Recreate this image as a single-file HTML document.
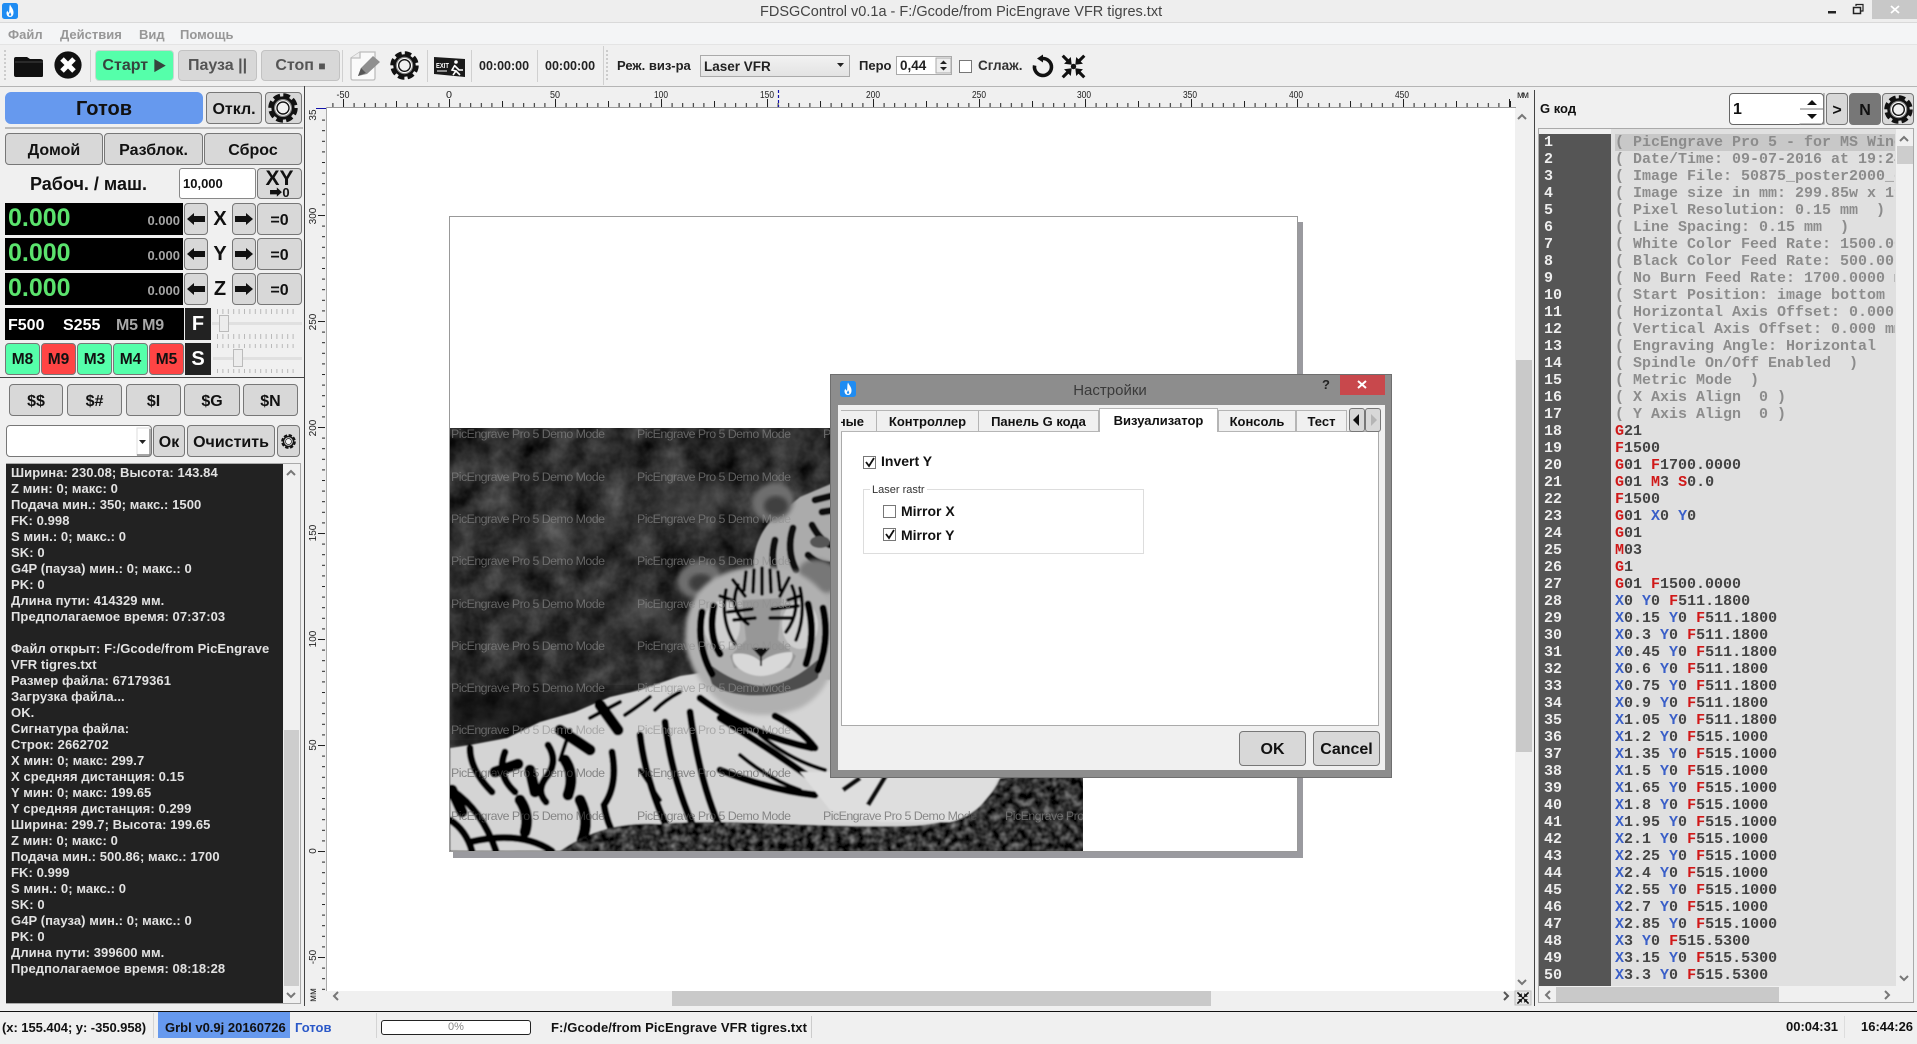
<!DOCTYPE html>
<html lang="ru"><head><meta charset="utf-8"><title>FDSGControl</title>
<style>
html,body{margin:0;padding:0;width:1917px;height:1038px;overflow:hidden;background:#f0f0f0;font-family:"Liberation Sans","Noto Sans CJK SC",sans-serif;color:#111}
div,span{box-sizing:border-box}
.a{position:absolute}
.t{position:absolute;white-space:nowrap;font-weight:bold}
.b{position:absolute;display:flex;align-items:center;justify-content:center;border:1px solid #777;border-radius:4px;background:#d8d8d8;font-weight:bold;font-size:16px;white-space:nowrap;padding-top:3px}
.tb{border-color:#c2c2c2;color:#555;font-size:16px;padding-top:0;padding-bottom:0}
.k{background:#000;position:absolute;left:5px;width:178px}
.gn{position:absolute;left:3px;top:0;line-height:30px;font:bold 25px/30px "Liberation Sans",sans-serif;color:#5be36d}
.sm{position:absolute;right:3px;bottom:7px;font:bold 13px/15px "Liberation Sans",sans-serif;color:#a5a5a5}
.m{position:absolute;top:343px;width:35px;height:32px;font-size:15.5px;border-radius:4px;display:flex;align-items:center;justify-content:center;font-weight:bold;border:1px solid #777;padding-top:2px}
.gr{background:#55ffaa}.rd{background:#ff4444}
#con{position:absolute;left:6px;top:464px;width:277px;height:539px;background:#222;color:#e2e2e2;font:bold 13px/16px "Liberation Sans",sans-serif;letter-spacing:.08px;padding:1px 0 0 5px;white-space:pre;overflow:hidden}
#num{position:absolute;left:1539px;top:134px;width:72px;height:852px;background:#555;color:#eee;font:bold 15px/17px "Liberation Mono",monospace;padding-left:5px;white-space:pre;overflow:hidden}
#code{position:absolute;left:1611px;top:129px;width:285px;height:857px;background:#e0e0e0;overflow:hidden}
#cd{position:absolute;left:4px;top:5px;width:280px;overflow:hidden;font:bold 15px/17px "Liberation Mono",monospace;color:#444;white-space:pre}
.c{color:#8c8c8c}i{font-style:normal;color:#d01818}u{text-decoration:none;color:#3a5fc8}
.tab{position:absolute;top:410px;height:22px;background:#f0f0f0;border:1px solid #b5b5b5;display:flex;align-items:center;justify-content:center;font:bold 13px "Liberation Sans",sans-serif;white-space:nowrap;overflow:hidden}
.cb{position:absolute;width:13px;height:13px;background:#fff;border:1px solid #777}
</style></head><body>

<!-- title bar -->
<div class="a" style="left:0;top:0;width:1917px;height:23px;background:#eeeeee;border-bottom:1px solid #d9d9d9"></div>
<div class="t" style="left:760px;top:2px;line-height:21px;font-size:14.5px;font-weight:normal;color:#444;width:400px;text-align:center">FDSGControl v0.1a - F:/Gcode/from PicEngrave VFR tigres.txt</div>
<div class="a" style="left:1872px;top:0;width:45px;height:19px;background:#c8c8c8"></div>
<!-- menu -->
<div class="a" style="left:0;top:23px;width:1917px;height:22px;background:#f4f5f6;border-bottom:1px solid #e4e4e4"></div>
<div class="t" style="left:8px;top:25px;line-height:20px;font-size:13px;color:#979797">Файл</div>
<div class="t" style="left:60px;top:25px;line-height:20px;font-size:13px;color:#979797">Действия</div>
<div class="t" style="left:139px;top:25px;line-height:20px;font-size:13px;color:#979797">Вид</div>
<div class="t" style="left:180px;top:25px;line-height:20px;font-size:13px;color:#979797">Помощь</div>
<!-- toolbar -->
<div class="a" style="left:0;top:45px;width:1917px;height:42px;background:#f0f0f0;border-bottom:1px solid #b5b5b5"></div>
<div class="b tb" style="left:95px;top:50px;width:79px;height:31px;background:#55ffaa;color:#36443e;border-color:#c8d8d0">Старт&nbsp;<span style="font-size:14px">▶</span></div>
<div class="b tb" style="left:178px;top:50px;width:79px;height:31px">Пауза ||</div>
<div class="b tb" style="left:261px;top:50px;width:79px;height:31px">Стоп&nbsp;<span style="font-size:12px">■</span></div>
<div class="t" style="left:479px;top:56px;line-height:20px;font-size:12.5px;color:#222">00:00:00</div>
<div class="t" style="left:545px;top:56px;line-height:20px;font-size:12.5px;color:#222">00:00:00</div>
<div class="t" style="left:617px;top:56px;line-height:20px;font-size:13px;color:#222">Реж. виз-ра</div>
<div class="a" style="left:700px;top:55px;width:150px;height:22px;background:linear-gradient(#f2f2f2,#e3e3e3);border:1px solid #aaa"></div>
<div class="t" style="left:704px;top:57px;line-height:20px;font-size:13.5px;color:#222">Laser VFR</div>
<div class="t" style="left:859px;top:56px;line-height:20px;font-size:13px;color:#222">Перо</div>
<div class="a" style="left:896px;top:56px;width:56px;height:19px;background:#fff;border:1px solid #aaa"></div>
<div class="t" style="left:900px;top:56px;line-height:19px;font-size:13.5px;color:#222">0,44</div>
<div class="a" style="left:959px;top:60px;width:13px;height:13px;background:#fff;border:1px solid #777"></div>
<div class="t" style="left:978px;top:56px;line-height:20px;font-size:13.5px;color:#333">Сглаж.</div>

<!-- left panel -->
<div class="b" style="left:5px;top:92px;width:198px;height:32px;background:#6699ee;border-color:#6699ee;font-size:20px;border-radius:6px">Готов</div>
<div class="b" style="left:206px;top:92px;width:56px;height:32px">Откл.</div>
<div class="b" style="left:265px;top:92px;width:37px;height:32px"></div>
<div class="a" style="left:5px;top:127px;width:298px;height:2px;background:#bbb"></div>
<div class="b" style="left:5px;top:133px;width:98px;height:32px">Домой</div>
<div class="b" style="left:104px;top:133px;width:99px;height:32px">Разблок.</div>
<div class="b" style="left:204px;top:133px;width:98px;height:32px">Сброс</div>
<div class="t" style="left:30px;top:172px;line-height:24px;font-size:18px">Рабоч. / маш.</div>
<div class="a" style="left:179px;top:168px;width:77px;height:31px;background:#fff;border:1px solid #888;border-radius:3px"></div>
<div class="t" style="left:183px;top:168px;line-height:31px;font-size:13px">10,000</div>
<div class="b" style="left:257px;top:168px;width:45px;height:31px;font-size:21px;line-height:16px;display:block;text-align:center;padding-top:2px">XY<div style="font-size:13px;line-height:11px;margin-top:0">➡0</div></div>

<div class="k" style="top:203px;height:32px"><span class="gn">0.000</span><span class="sm">0.000</span></div>
<div class="k" style="top:238px;height:32px"><span class="gn">0.000</span><span class="sm">0.000</span></div>
<div class="k" style="top:273px;height:32px"><span class="gn">0.000</span><span class="sm">0.000</span></div>
<div class="b" style="left:184px;top:203px;width:24px;height:32px"></div><div class="b" style="left:232px;top:203px;width:24px;height:32px"></div><div class="b" style="left:257px;top:203px;width:45px;height:32px">=0</div>
<div class="b" style="left:184px;top:238px;width:24px;height:32px"></div><div class="b" style="left:232px;top:238px;width:24px;height:32px"></div><div class="b" style="left:257px;top:238px;width:45px;height:32px">=0</div>
<div class="b" style="left:184px;top:273px;width:24px;height:32px"></div><div class="b" style="left:232px;top:273px;width:24px;height:32px"></div><div class="b" style="left:257px;top:273px;width:45px;height:32px">=0</div>
<div class="t" style="left:208px;width:24px;text-align:center;top:203px;line-height:32px;font-size:20px">X</div>
<div class="t" style="left:208px;width:24px;text-align:center;top:238px;line-height:32px;font-size:20px">Y</div>
<div class="t" style="left:208px;width:24px;text-align:center;top:273px;line-height:32px;font-size:20px">Z</div>

<div class="a" style="left:5px;top:308px;width:179px;height:32px;background:#000"></div>
<div class="t" style="left:8px;top:310px;line-height:32px;font-size:16px;color:#fff">F500</div>
<div class="t" style="left:63px;top:310px;line-height:32px;font-size:16px;color:#fff">S255</div>
<div class="t" style="left:116px;top:310px;line-height:32px;font-size:16px;color:#a8a8a8;letter-spacing:-.2px">M5 M9</div>
<div class="t" style="left:185px;top:308px;width:26px;height:32px;background:#222;color:#fff;font-size:20px;line-height:33px;text-align:center">F</div>
<div class="m gr" style="left:5px">M8</div><div class="m rd" style="left:41px">M9</div><div class="m gr" style="left:77px">M3</div><div class="m gr" style="left:113px">M4</div><div class="m rd" style="left:149px">M5</div>
<div class="t" style="left:185px;top:343px;width:26px;height:32px;background:#222;color:#fff;font-size:20px;line-height:33px;text-align:center">S</div>
<div class="a" style="left:212px;top:322px;width:90px;height:3px;background:#e0e0e0"></div>
<div class="a" style="left:219px;top:315px;width:10px;height:17px;background:#ececec;border:1px solid #bbb"></div>
<div class="a" style="left:213px;top:357px;width:89px;height:3px;background:#e0e0e0"></div>
<div class="a" style="left:233px;top:349px;width:10px;height:18px;background:#ececec;border:1px solid #bbb"></div>
<div class="a" style="left:0;top:377px;width:304px;height:1px;background:#444"></div>

<div class="b" style="left:9px;top:384px;width:54px;height:32px">$$</div>
<div class="b" style="left:67px;top:384px;width:55px;height:32px">$#</div>
<div class="b" style="left:126px;top:384px;width:55px;height:32px">$I</div>
<div class="b" style="left:184px;top:384px;width:56px;height:32px">$G</div>
<div class="b" style="left:243px;top:384px;width:55px;height:32px">$N</div>
<div class="a" style="left:6px;top:425px;width:146px;height:32px;background:#fff;border:1px solid #777;border-radius:4px"></div>
<div class="b" style="left:153px;top:425px;width:32px;height:32px">Ок</div>
<div class="b" style="left:187px;top:425px;width:88px;height:32px">Очистить</div>
<div class="b" style="left:277px;top:425px;width:23px;height:32px"></div>

<div class="a" style="left:6px;top:463px;width:295px;height:541px;border:1px solid #aaa;background:#f0f0f0"></div>
<div id="con">Ширина: 230.08; Высота: 143.84
Z мин: 0; макс: 0
Подача мин.: 350; макс.: 1500
FK: 0.998
S мин.: 0; макс.: 0
SK: 0
G4P (пауза) мин.: 0; макс.: 0
PK: 0
Длина пути: 414329 мм.
Предполагаемое время: 07:37:03

Файл открыт: F:/Gcode/from PicEngrave
VFR tigres.txt
Размер файла: 67179361
Загрузка файла...
OK.
Сигнатура файла:
Строк: 2662702
X мин: 0; макс: 299.7
X средняя дистанция: 0.15
Y мин: 0; макс: 199.65
Y средняя дистанция: 0.299
Ширина: 299.7; Высота: 199.65
Z мин: 0; макс: 0
Подача мин.: 500.86; макс.: 1700
FK: 0.999
S мин.: 0; макс.: 0
SK: 0
G4P (пауза) мин.: 0; макс.: 0
PK: 0
Длина пути: 399600 мм.
Предполагаемое время: 08:18:28</div>
<div class="a" style="left:284px;top:730px;width:15px;height:256px;background:#cdcdcd"></div>

<!-- canvas -->
<div class="a" style="left:304px;top:86px;width:1px;height:920px;background:#444"></div>
<div class="a" style="left:1534px;top:90px;width:1px;height:916px;background:#444"></div>
<div class="a" style="left:326px;top:108px;width:1189px;height:883px;background:#fff"></div>
<div class="a" style="left:672px;top:991px;width:539px;height:15px;background:#c9c9c9"></div>
<div class="a" style="left:1516px;top:360px;width:16px;height:392px;background:#c9c9c9"></div>
<div class="a" style="left:453px;top:222px;width:850px;height:636px;background:#9a9a9f"></div>
<div class="a" style="left:449px;top:216px;width:849px;height:636px;background:#fff;border:1px solid #999"></div>

<!-- main svg: rulers, tiger, icons -->
<svg class="a" style="left:0;top:0" width="1917" height="1038" viewBox="0 0 1917 1038" font-family="'Liberation Sans',sans-serif">
<defs>
<pattern id="t1" patternUnits="userSpaceOnUse" x="449" y="99" width="10.6" height="8"><rect y="4" width="1" height="4" fill="#222"/></pattern>
<pattern id="t2" patternUnits="userSpaceOnUse" x="449" y="99" width="53" height="8"><rect y="2" width="1" height="6" fill="#222"/></pattern>
<pattern id="t3" patternUnits="userSpaceOnUse" x="449" y="99" width="106" height="8"><rect width="1" height="8" fill="#222"/></pattern>
<pattern id="v1" patternUnits="userSpaceOnUse" x="318" y="851" width="8" height="10.6"><rect x="4" width="3" height="1" fill="#222"/></pattern>
<pattern id="v3" patternUnits="userSpaceOnUse" x="318" y="851" width="8" height="106"><rect width="7" height="1" fill="#222"/></pattern>
<pattern id="sl" patternUnits="userSpaceOnUse" width="5.4" height="5" x="217" y="0"><rect width="1" height="5" fill="#b8b8b8"/></pattern>
<filter id="n" x="0" y="0" width="1" height="1" color-interpolation-filters="sRGB"><feTurbulence type="fractalNoise" baseFrequency=".035" numOctaves="4" seed="4"/><feColorMatrix values=".45 0 0 0 -.05 .45 0 0 0 -.05 .45 0 0 0 -.05 0 0 0 0 1"/></filter>
<filter id="gs" x="0" y="0" width="1" height="1" color-interpolation-filters="sRGB"><feTurbulence type="fractalNoise" baseFrequency=".14" numOctaves="2" seed="8"/><feColorMatrix values=".9 0 0 0 -.26 .9 0 0 0 -.26 .9 0 0 0 -.26 0 0 0 0 1" result="c"/><feComposite in="c" in2="SourceGraphic" operator="in"/></filter>
<filter id="bl"><feGaussianBlur stdDeviation=".7"/></filter>
<filter id="bl2"><feGaussianBlur stdDeviation="2"/></filter>
<filter id="bl6"><feGaussianBlur stdDeviation="7"/></filter>
<symbol id="gear" viewBox="0 0 30 30"><circle cx="15" cy="15" r="13" fill="none" stroke="#111" stroke-width="3.4" stroke-dasharray="6.8 3.4"/><circle cx="15" cy="15" r="11.6" fill="#111"/><circle cx="15" cy="15" r="9" fill="#8a8a8a"/><circle cx="15" cy="15" r="7.8" fill="#fff"/><circle cx="15" cy="15" r="6" fill="#f0f0f0" stroke="#111" stroke-width="1.4"/></symbol>
<symbol id="col" viewBox="0 0 30 30"><g stroke="#111" stroke-width="3.4" fill="none"><path d="M3 3 10 10M27 3 20 10M3 27 10 20M27 27 20 20"/></g><g fill="#111"><path d="M13 13 4.500 12 12 4.500Z"/><path d="M17 13 25.500 12 18 4.500Z"/><path d="M13 17 4.500 18 12 25.500Z"/><path d="M17 17 25.500 18 18 25.500Z"/><circle cx="15" cy="15" r="3"/></g></symbol>
<symbol id="logo" viewBox="0 0 16 16"><rect width="16" height="16" rx="2.5" fill="#1f8cf2"/><path d="M8 1.5C9 4 11.5 6 11.5 9.5 11.5 12.5 10 14 8 14 6 14 4.5 12.5 4.5 10 4.5 9 5 8.2 5.6 7.6 5.6 9 6.3 9.5 7 9.5 7.6 7 7 4 8 1.5Z" fill="#fff"/><path d="M8 9C8.6 10.5 9.4 11 9.2 12 9 13 7.2 13 6.900 12 6.700 11 7.800 10.500 8 9Z" fill="#1f8cf2"/></symbol>
</defs>

<!-- tiger image -->
<svg x="450" y="428" width="633" height="423" viewBox="450 428 633 423">
<rect x="450" y="428" width="633" height="423" fill="#333" filter="url(#n)"/>
<ellipse cx="690" cy="500" rx="40" ry="26" fill="#666" opacity=".3" filter="url(#bl6)"/>
<ellipse cx="560" cy="540" rx="60" ry="25" fill="#606060" opacity=".2" filter="url(#bl6)"/>
<ellipse cx="640" cy="620" rx="50" ry="30" fill="#555" opacity=".2" filter="url(#bl6)"/>
<rect x="450" y="690" width="190" height="50" fill="#0a0a0a" opacity=".55" filter="url(#bl6)"/>
<g filter="url(#bl)">
<!-- rear tiger -->
<path d="M754 568C752 550 762 530 770 522L800 497 840 480 1083 470 1083 780 760 780Z" fill="#ababab"/>
<ellipse cx="773" cy="502" rx="21" ry="19" transform="rotate(-25 773 502)" fill="#6e6e6e" filter="url(#bl2)"/><ellipse cx="776" cy="506" rx="12" ry="10" fill="#3f3f3f" filter="url(#bl2)"/>
<g stroke="#070707" fill="none" stroke-width="7" stroke-linecap="round"><path d="M775 540Q770 560 776 575"/><path d="M793 528Q786 550 796 570"/><path d="M812 525Q820 540 830 545"/><path d="M808 555Q818 565 832 565"/><path d="M815 500 835 495"/><path d="M822 512 835 510"/></g>
<ellipse cx="820" cy="542" rx="10" ry="6" fill="#555"/>
<!-- body -->
<path d="M450 748 470 745 507 738 540 722 575 712 610 697 640 690 680 676 720 670 830 680 1083 700 1083 775 1000 780 1000 825 900 832 700 835 620 842 560 851 450 851Z" fill="#d4d4d4"/>
<!-- head -->
<ellipse cx="699" cy="579" rx="22" ry="17" transform="rotate(-20 699 579)" fill="#6e6e6e" filter="url(#bl2)"/><ellipse cx="701" cy="583" rx="12" ry="9" fill="#3e3e3e" filter="url(#bl2)"/>
<ellipse cx="820" cy="576" rx="22" ry="16" transform="rotate(20 820 576)" fill="#777" filter="url(#bl2)"/>
<path d="M686 625C690 590 715 568 760 566 805 566 832 590 836 630 838 670 825 695 800 708 770 720 735 716 718 700 697 682 682 655 686 625Z" fill="#b0b0b0" filter="url(#bl2)"/>
<ellipse cx="722" cy="625" rx="18" ry="24" fill="#cfcfcf"/><ellipse cx="800" cy="625" rx="18" ry="24" fill="#cfcfcf"/>
<path d="M742 600 782 598 778 640 796 656 790 668 734 668 730 656 746 640Z" fill="#979797"/>
<path d="M704 660C722 674 738 684 762 686 788 684 804 672 822 656L818 678C796 698 732 702 712 684Z" fill="#4e4e4e"/>
<path d="M733 654C745 652 755 656 761 662 768 656 780 652 792 652 796 664 776 676 761 676 746 676 730 666 733 654Z" fill="#d8d8d8"/>
<path d="M752 648H770L761 658Z" fill="#0a0a0a"/><path d="M761 657V666" stroke="#0a0a0a" stroke-width="2"/>
<g stroke="#060606" fill="none" stroke-linecap="round">
<g stroke-width="7"><path d="M702 612Q696 645 712 674"/><path d="M714 606Q708 635 720 654"/><path d="M808 604Q816 635 806 664"/><path d="M823 608Q830 640 818 670"/></g>
<g stroke-width="3.500"><path d="M726 590Q720 620 735 644"/><path d="M738 585Q728 610 748 624"/><path d="M792 586Q802 610 786 632"/><path d="M800 588Q806 615 796 640"/><path d="M746 572 744 590"/><path d="M754 570 753 592"/><path d="M762 568 762 594"/><path d="M770 570 771 592"/><path d="M778 572 780 590"/><path d="M728 612 752 609"/><path d="M772 609 798 606"/><path d="M734 620 755 618"/><path d="M770 618 792 618"/><path d="M733 580 745 596"/><path d="M789 578 780 596"/><path d="M720 596 732 600"/><path d="M800 596 788 600"/></g>
<g stroke-width="7"><path d="M470 748Q470 770 492 792"/><path d="M505 752Q496 775 515 792"/><path d="M548 745Q558 760 548 775 535 790 546 802"/><path d="M612 752Q618 785 604 805 608 830 622 846"/><path d="M640 735Q646 785 672 838"/><path d="M665 722Q672 785 702 845"/><path d="M690 712Q700 785 722 832"/><path d="M700 698Q750 735 812 748"/><path d="M720 718Q780 755 830 792"/><path d="M452 790Q482 810 496 851"/><path d="M450 820Q466 830 472 851"/><path d="M470 842Q520 830 552 851"/><path d="M775 716Q800 728 815 748"/><path d="M720 770Q770 790 815 795"/></g>
<g stroke-width="11"><path d="M530 770 535 792"/><path d="M565 760Q575 775 568 795"/><path d="M580 800Q590 820 582 840"/><path d="M520 800Q530 815 525 832"/><path d="M495 772 518 764"/><path d="M560 730 590 750"/><path d="M600 705 618 730"/><path d="M452 790 462 812"/></g>
<g stroke-width="4"><path d="M620 702Q605 710 590 718"/><path d="M650 697Q640 705 625 715"/><path d="M680 692Q665 700 655 710"/><path d="M760 735Q790 760 825 770"/><path d="M740 755Q770 780 800 790"/><path d="M640 770 660 800"/><path d="M570 730 560 760"/></g>
</g>
<!-- grass -->
<path d="M560 851C590 830 620 822 660 824 720 818 830 828 900 826 950 826 985 812 1000 778 1030 774 1060 776 1083 772V851Z" fill="#000" filter="url(#gs)"/>
<path d="M800 772H1000C990 800 975 816 950 822L880 822 830 810Z" fill="#dedede"/>
<path d="M843 790 860 778M868 805 888 772" stroke="#111" stroke-width="5" fill="none"/>
</g>
<g font-size="12.4" fill="#8f8f8f" opacity=".62">
<text x="451" y="438" textLength="154">PicEngrave Pro 5 Demo Mode</text><text x="637" y="438" textLength="154">PicEngrave Pro 5 Demo Mode</text><text x="823" y="438" textLength="154">PicEngrave Pro 5 Demo Mode</text>
<text x="451" y="481" textLength="154">PicEngrave Pro 5 Demo Mode</text><text x="637" y="481" textLength="154">PicEngrave Pro 5 Demo Mode</text>
<text x="451" y="523" textLength="154">PicEngrave Pro 5 Demo Mode</text><text x="637" y="523" textLength="154">PicEngrave Pro 5 Demo Mode</text>
<text x="451" y="565" textLength="154">PicEngrave Pro 5 Demo Mode</text><text x="637" y="565" textLength="154">PicEngrave Pro 5 Demo Mode</text>
<text x="451" y="608" textLength="154">PicEngrave Pro 5 Demo Mode</text><text x="637" y="608" textLength="154">PicEngrave Pro 5 Demo Mode</text>
<text x="451" y="650" textLength="154">PicEngrave Pro 5 Demo Mode</text><text x="637" y="650" textLength="154">PicEngrave Pro 5 Demo Mode</text>
<text x="451" y="692" textLength="154">PicEngrave Pro 5 Demo Mode</text><text x="637" y="692" textLength="154">PicEngrave Pro 5 Demo Mode</text>
<text x="451" y="734" textLength="154">PicEngrave Pro 5 Demo Mode</text><text x="637" y="734" textLength="154">PicEngrave Pro 5 Demo Mode</text>
<text x="451" y="777" textLength="154" fill="#555">PicEngrave Pro 5 Demo Mode</text><text x="637" y="777" textLength="154" fill="#555">PicEngrave Pro 5 Demo Mode</text>
<text x="451" y="820" textLength="154" fill="#555">PicEngrave Pro 5 Demo Mode</text><text x="637" y="820" textLength="154" fill="#555">PicEngrave Pro 5 Demo Mode</text><text x="823" y="820" textLength="154" fill="#555">PicEngrave Pro 5 Demo Mode</text><text x="1005" y="820" textLength="154">PicEngrave Pro 5 Demo Mode</text>
</g>
</svg>

<!-- rulers -->
<rect x="330" y="99" width="1185" height="8" fill="url(#t1)"/><rect x="330" y="99" width="1185" height="8" fill="url(#t2)"/><rect x="330" y="99" width="1185" height="8" fill="url(#t3)"/>
<rect x="326" y="107" width="1190" height="1" fill="#999"/>
<rect x="326" y="107" width="1" height="884" fill="#aaa"/>
<path d="M778.500 90V107" stroke="#1111aa" stroke-width="1.200" stroke-dasharray="3 2"/>
<rect x="1510" y="101" width="1" height="6" fill="#222"/>
<rect x="318" y="112" width="8" height="880" fill="url(#v1)"/><rect x="318" y="112" width="8" height="880" fill="url(#v3)"/>
<rect x="316" y="108" width="10" height="1" fill="#1111aa"/>
<g font-size="10" fill="#222" text-anchor="middle">
<text x="343" y="98" textLength="13" lengthAdjust="spacingAndGlyphs">-50</text><text x="449" y="98" textLength="6" lengthAdjust="spacingAndGlyphs">0</text><text x="555" y="98" textLength="10" lengthAdjust="spacingAndGlyphs">50</text><text x="661" y="98" textLength="14" lengthAdjust="spacingAndGlyphs">100</text><text x="767" y="98" textLength="14" lengthAdjust="spacingAndGlyphs">150</text><text x="873" y="98" textLength="14" lengthAdjust="spacingAndGlyphs">200</text><text x="979" y="98" textLength="14" lengthAdjust="spacingAndGlyphs">250</text><text x="1084" y="98" textLength="14" lengthAdjust="spacingAndGlyphs">300</text><text x="1190" y="98" textLength="14" lengthAdjust="spacingAndGlyphs">350</text><text x="1296" y="98" textLength="14" lengthAdjust="spacingAndGlyphs">400</text><text x="1402" y="98" textLength="14" lengthAdjust="spacingAndGlyphs">450</text>
<text x="1523" y="98" textLength="12">мм</text>
<g>
<text transform="translate(316,216) rotate(-90)">300</text><text transform="translate(316,322) rotate(-90)">250</text><text transform="translate(316,428) rotate(-90)">200</text><text transform="translate(316,533) rotate(-90)">150</text><text transform="translate(316,639) rotate(-90)">100</text><text transform="translate(316,745) rotate(-90)">50</text><text transform="translate(316,851) rotate(-90)">0</text><text transform="translate(316,957) rotate(-90)">-50</text><text transform="translate(316,995) rotate(-90)">мм</text><text transform="translate(316,115) rotate(-90)">35</text>
</g></g>

<!-- scroll chevrons -->
<g fill="none" stroke="#777" stroke-width="2">
<path d="M338 1000 334 996 338 992"/><path d="M1504 992 1508 996 1504 1000" stroke="#555"/>
<path d="M1518 119 1522 115 1526 119"/><path d="M1518 980 1522 984 1526 980"/>
<path d="M287 475 291 471 295 475"/><path d="M287 993 291 997 295 993"/>
</g>
<rect x="1515" y="991" width="16" height="14" fill="#e6e6e6" stroke="#bbb"/>
<use href="#col" x="1516" y="991" width="14" height="14"/>

<!-- top icons -->
<use href="#logo" x="2" y="3" width="16" height="16"/>
<path d="M14 59Q14 57 16 57H27L30 59H40Q43 59 43 61V76Q43 77 41 77H16Q14 77 14 75Z" fill="#111"/><path d="M15 62H43" stroke="#555" stroke-width=".8"/>
<g stroke="#ccc" stroke-width="2" stroke-dasharray="2 2"><path d="M5 50V82"/><path d="M607 50V82"/></g>
<circle cx="68" cy="65" r="13.6" fill="#111"/><path d="M62 59 74 71M74 59 62 71" stroke="#fff" stroke-width="5"/>
<g stroke="#d0d0d0"><path d="M90.500 50V82M342.500 50V82M427.500 50V82M471.500 50V82M537.500 50V82M603.500 46V85"/></g>
<path d="M351 58 360 52H375V78Q375 80 373 80H353Q351 80 351 78Z" fill="#fafafa" stroke="#bdbdbd" stroke-width="1.3"/><path d="M351 58H360V52" fill="#eee" stroke="#bdbdbd" stroke-width="1.3"/>
<path d="M358 76 361 68 373 56 380 62 367 74Z" fill="#8f8f8f"/><path d="M358 76 361 68 366 73Z" fill="#555"/>
<use href="#gear" x="390" y="51" width="29" height="29"/>
<path d="M434 57 465 59V77L434 74Z" fill="#1a1a1a"/><text x="436" y="68" font-size="7.500" font-weight="bold" fill="#fff" textLength="13" lengthAdjust="spacingAndGlyphs">EXIT</text><path d="M437 71H447" stroke="#fff"/><circle cx="456" cy="62" r="1.800" fill="#fff"/><path d="M455 65 452 70 456 71 453 75M455 66 459 70 463 70M456 71 460 75" stroke="#fff" stroke-width="1.600" fill="none"/>
<!-- combo arrow, spin -->
<path d="M837 63H844L840.500 67Z" fill="#222"/>
<rect x="936" y="58" width="15" height="15" fill="#eee" stroke="#aaa"/><path d="M940 64H947L943.500 60.500ZM940 67H947L943.500 70.500Z" fill="#222"/>
<path d="M1043 58.500A8.500 8.500 0 1 1 1034.600 65.500" fill="none" stroke="#111" stroke-width="3.600"/><path d="M1043 54.500V62.500L1037 58.500Z" fill="#111"/>
<use href="#col" x="1060" y="53" width="27" height="27"/>
<!-- window buttons -->
<rect x="1828" y="11" width="8" height="2.500" fill="#222"/>
<rect x="1853.500" y="7.500" width="7" height="6" fill="none" stroke="#222" stroke-width="1.500"/><path d="M1856 6V4.500H1863V11H1861" fill="none" stroke="#222" stroke-width="1.200"/>
<path d="M1891 6 1899 13M1899 6 1891 13" stroke="#fff" stroke-width="1.800"/>

<!-- left icons -->
<use href="#gear" x="268" y="93" width="30" height="30"/>
<g fill="#111"><path d="M187 219 194 213V216H205V222H194V225Z"/><path d="M187 254 194 248V251H205V257H194V260Z"/><path d="M187 289 194 283V286H205V292H194V295Z"/><path d="M253 219 246 213V216H235V222H246V225Z"/><path d="M253 254 246 248V251H235V257H246V260Z"/><path d="M253 289 246 283V286H235V292H246V295Z"/></g>
<rect x="217" y="309" width="81" height="5" fill="url(#sl)"/><rect x="217" y="334" width="81" height="5" fill="url(#sl)"/><rect x="217" y="344" width="81" height="4" fill="url(#sl)"/><rect x="217" y="369" width="81" height="4" fill="url(#sl)"/>
<rect x="137" y="428" width="13" height="27" fill="#fff" stroke="#ddd"/><path d="M139 440H146L142.500 444Z" fill="#222"/>
<path d="M137 455H150V429" fill="none" stroke="#888" stroke-width="1.400"/>
<use href="#gear" x="281" y="434" width="15" height="15"/>
</svg>

<!-- right panel -->
<div class="t" style="left:1540px;top:99px;line-height:20px;font-size:13px">G код</div>
<div class="a" style="left:1729px;top:93px;width:95px;height:32px;background:#fff;border:1px solid #666;border-radius:4px"></div>
<div class="t" style="left:1733px;top:94px;line-height:32px;font-size:16px">1</div>
<div class="b" style="left:1826px;top:93px;width:22px;height:32px">&gt;</div>
<div class="b" style="left:1849px;top:93px;width:32px;height:32px;background:#777">N</div>
<div class="b" style="left:1882px;top:93px;width:32px;height:32px"></div>
<div class="a" style="left:1538px;top:128px;width:376px;height:875px;border:1px solid #aaa;background:#f0f0f0"></div>
<div id="num">1
2
3
4
5
6
7
8
9
10
11
12
13
14
15
16
17
18
19
20
21
22
23
24
25
26
27
28
29
30
31
32
33
34
35
36
37
38
39
40
41
42
43
44
45
46
47
48
49
50</div>
<div id="code"><div class="a" style="left:4px;top:5px;width:280px;height:17px;background:#c8c8c8"></div><div id="cd"><span class="c">( PicEngrave Pro 5 - for MS Windows
( Date/Time: 09-07-2016 at 19:24
( Image File: 50875_poster2000_c
( Image size in mm: 299.85w x 199
( Pixel Resolution: 0.15 mm  )
( Line Spacing: 0.15 mm  )
( White Color Feed Rate: 1500.00
( Black Color Feed Rate: 500.00
( No Burn Feed Rate: 1700.0000 mm
( Start Position: image bottom left
( Horizontal Axis Offset: 0.000
( Vertical Axis Offset: 0.000 mm
( Engraving Angle: Horizontal
( Spindle On/Off Enabled  )
( Metric Mode  )
( X Axis Align  0 )
( Y Axis Align  0 )</span>
<i>G</i>21
<i>F</i>1500
<i>G</i>01 <i>F</i>1700.0000
<i>G</i>01 <i>M</i>3 <i>S</i>0.0
<i>F</i>1500
<i>G</i>01 <u>X</u>0 <u>Y</u>0
<i>G</i>01
<i>M</i>03
<i>G</i>1
<i>G</i>01 <i>F</i>1500.0000
<u>X</u>0 <u>Y</u>0 <i>F</i>511.1800
<u>X</u>0.15 <u>Y</u>0 <i>F</i>511.1800
<u>X</u>0.3 <u>Y</u>0 <i>F</i>511.1800
<u>X</u>0.45 <u>Y</u>0 <i>F</i>511.1800
<u>X</u>0.6 <u>Y</u>0 <i>F</i>511.1800
<u>X</u>0.75 <u>Y</u>0 <i>F</i>511.1800
<u>X</u>0.9 <u>Y</u>0 <i>F</i>511.1800
<u>X</u>1.05 <u>Y</u>0 <i>F</i>511.1800
<u>X</u>1.2 <u>Y</u>0 <i>F</i>515.1000
<u>X</u>1.35 <u>Y</u>0 <i>F</i>515.1000
<u>X</u>1.5 <u>Y</u>0 <i>F</i>515.1000
<u>X</u>1.65 <u>Y</u>0 <i>F</i>515.1000
<u>X</u>1.8 <u>Y</u>0 <i>F</i>515.1000
<u>X</u>1.95 <u>Y</u>0 <i>F</i>515.1000
<u>X</u>2.1 <u>Y</u>0 <i>F</i>515.1000
<u>X</u>2.25 <u>Y</u>0 <i>F</i>515.1000
<u>X</u>2.4 <u>Y</u>0 <i>F</i>515.1000
<u>X</u>2.55 <u>Y</u>0 <i>F</i>515.1000
<u>X</u>2.7 <u>Y</u>0 <i>F</i>515.1000
<u>X</u>2.85 <u>Y</u>0 <i>F</i>515.1000
<u>X</u>3 <u>Y</u>0 <i>F</i>515.5300
<u>X</u>3.15 <u>Y</u>0 <i>F</i>515.5300
<u>X</u>3.3 <u>Y</u>0 <i>F</i>515.5300</div></div>
<div class="a" style="left:1897px;top:146px;width:16px;height:18px;background:#cdcdcd"></div>
<div class="a" style="left:1556px;top:987px;width:223px;height:15px;background:#c9c9c9"></div>
<svg class="a" style="left:0;top:0" width="1917" height="1038" viewBox="0 0 1917 1038">
<g fill="none" stroke="#777" stroke-width="2"><path d="M1900 141 1904 137 1908 141"/><path d="M1900 976 1904 980 1908 976"/><path d="M1550 991 1546 995 1550 999"/><path d="M1885 991 1889 995 1885 999"/></g>
<path d="M1800 108.500H1823M1800 109.500H1823" stroke="#bbb"/><path d="M1800 125V124H1824V93" fill="none" stroke="#888"/>
<path d="M1807 105H1817L1812 100ZM1807 114H1817L1812 119Z" fill="#111"/>
<use href="#gear" x="1884" y="95" width="29" height="29"/>
</svg>

<!-- status bar -->
<div class="a" style="left:0;top:1011px;width:1917px;height:1px;background:#111"></div>
<div class="t" style="left:2px;top:1018px;line-height:20px;font-size:13px;letter-spacing:-.05px">(x: 155.404; y: -350.958)</div>
<div class="a" style="left:153px;top:1013px;width:1px;height:25px;background:#d4d4d4"></div>
<div class="t" style="left:158px;top:1012px;width:132px;height:26px;background:#6699ee;padding-left:7px;line-height:32px;font-size:13px">Grbl v0.9j 20160726</div>
<div class="t" style="left:295px;top:1018px;line-height:20px;font-size:13px;color:#2a58c8">Готов</div>
<div class="a" style="left:376px;top:1013px;width:1px;height:25px;background:#d4d4d4"></div>
<div class="a" style="left:381px;top:1020px;width:150px;height:15px;background:#fff;border:1px solid #222;border-radius:3px;font:11px/13px 'Liberation Sans',sans-serif;color:#888;text-align:center">0%</div>
<div class="t" style="left:551px;top:1018px;line-height:20px;font-size:13px;letter-spacing:.12px">F:/Gcode/from PicEngrave VFR tigres.txt</div>
<div class="a" style="left:811px;top:1016px;width:1px;height:22px;background:#ccc"></div>
<div class="t" style="left:1786px;top:1017px;line-height:20px;font-size:13px">00:04:31</div>
<div class="a" style="left:1844px;top:1016px;width:1px;height:22px;background:#ddd"></div>
<div class="t" style="left:1861px;top:1017px;line-height:20px;font-size:13px">16:44:26</div>

<!-- dialog -->
<div class="a" style="left:830px;top:374px;width:562px;height:404px;background:#8d8d8d;border:1px solid #6f6f6f"></div>
<div class="a" style="left:838px;top:405px;width:547px;height:365px;background:#f0f0f0"></div>
<div class="t" style="left:1010px;width:200px;text-align:center;top:381px;line-height:20px;font-size:15px;font-weight:normal;color:#3a3a3a">Настройки</div>
<div class="t" style="left:1322px;top:375px;line-height:20px;font-size:13px;color:#222">?</div>
<div class="a" style="left:1340px;top:375px;width:45px;height:20px;background:#c8484c"></div>
<div class="a" style="left:841px;top:431px;width:538px;height:295px;background:#fff;border:1px solid #aaa"></div>
<div class="tab" style="left:841px;width:36px;border-left:0;justify-content:flex-end;padding-right:12px">ные</div>
<div class="tab" style="left:876px;width:103px">Контроллер</div>
<div class="tab" style="left:978px;width:121px">Панель G кода</div>
<div class="tab" style="left:1099px;top:408px;height:24px;width:119px;background:#fff;border-bottom:0">Визуализатор</div>
<div class="tab" style="left:1218px;width:78px">Консоль</div>
<div class="tab" style="left:1296px;width:51px">Тест</div>
<div class="b" style="left:1349px;top:408px;width:16px;height:24px;border-radius:3px"></div>
<div class="b" style="left:1365px;top:408px;width:16px;height:24px;border-radius:3px"></div>
<div class="cb" style="left:863px;top:456px"></div>
<div class="t" style="left:881px;top:451px;line-height:20px;font-size:14px">Invert Y</div>
<div class="a" style="left:863px;top:489px;width:281px;height:65px;border:1px solid #ddd"></div>
<div class="t" style="left:870px;top:482px;line-height:16px;font-size:11px;font-weight:normal;background:#fff;padding:0 2px;color:#333">Laser rastr</div>
<div class="cb" style="left:883px;top:505px"></div>
<div class="t" style="left:901px;top:501px;line-height:20px;font-size:14px">Mirror X</div>
<div class="cb" style="left:883px;top:528px"></div>
<div class="t" style="left:901px;top:525px;line-height:20px;font-size:14px">Mirror Y</div>
<div class="b" style="left:1239px;top:731px;width:67px;height:35px">OK</div>
<div class="b" style="left:1313px;top:731px;width:67px;height:35px">Cancel</div>
<svg class="a" style="left:0;top:0" width="1917" height="1038" viewBox="0 0 1917 1038">
<use href="#logo" x="840" y="381" width="16" height="16"/>
<path d="M1359 414V426L1353 420Z" fill="#111"/><path d="M1371 414V426L1377 420Z" fill="#b5b5b5"/>
<path d="M1358 381 1366 388M1366 381 1358 388" stroke="#fff" stroke-width="2"/>
<g fill="none" stroke="#111" stroke-width="1.800"><path d="M866 462 869 466 874 458"/><path d="M886 534 889 538 894 530"/></g>
</svg>
</body></html>
